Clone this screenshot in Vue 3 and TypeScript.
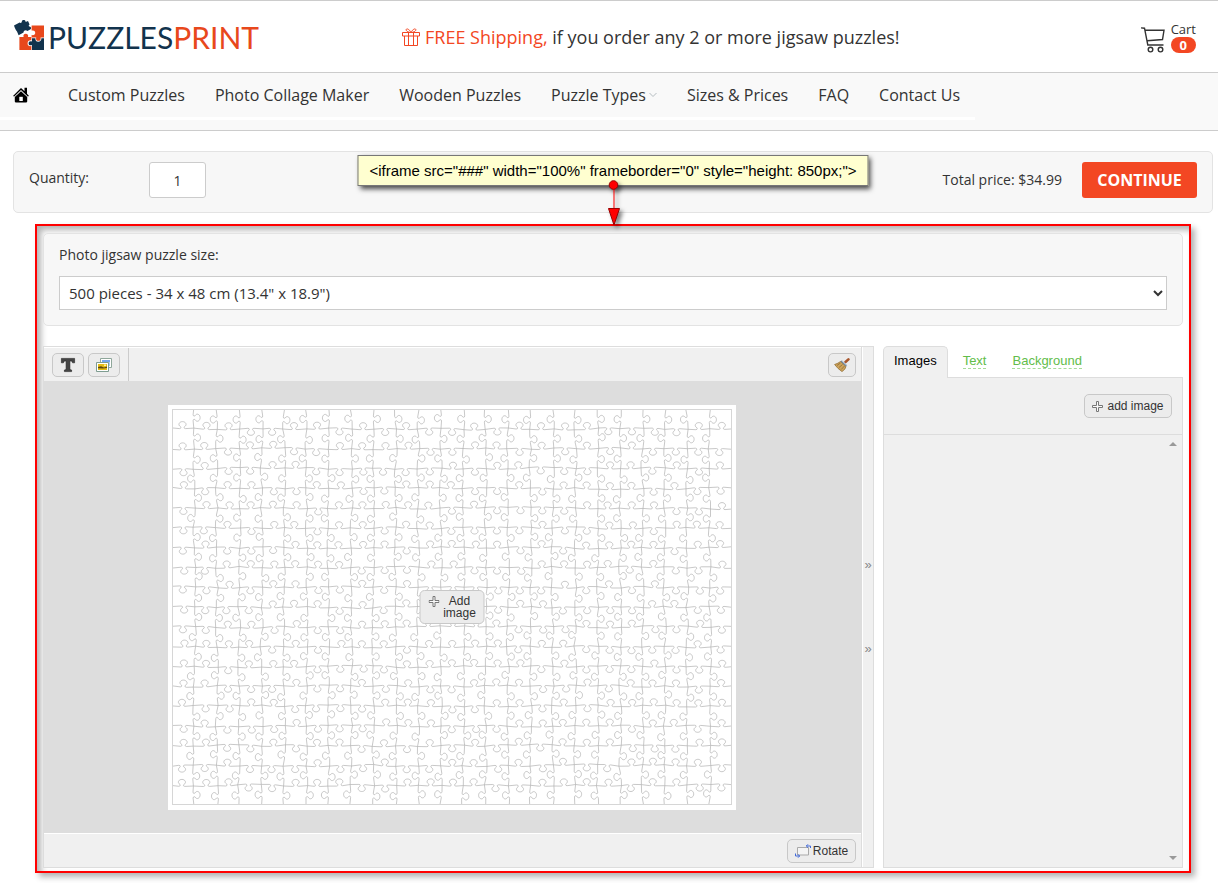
<script setup lang="ts">
import { ref } from 'vue'

interface NavItem {
  label: string
  menu?: boolean
}

const navItems: NavItem[] = [
  { label: 'Custom Puzzles' },
  { label: 'Photo Collage Maker' },
  { label: 'Wooden Puzzles' },
  { label: 'Puzzle Types', menu: true },
  { label: 'Sizes & Prices' },
  { label: 'FAQ' },
  { label: 'Contact Us' },
]

const tabs = ['Images', 'Text', 'Background']
const activeTab = ref('Images')
const quantity = ref('1')
const sizes = ['500 pieces - 34 x 48 cm (13.4" x 18.9")']
const size = ref(sizes[0])
const snippet = '<iframe src="###" width="100%" frameborder="0" style="height: 850px;">'

// Jigsaw cut lines: a jittered grid whose edges each carry one knob.
const COLS = 25
const ROWS = 20
const WIDTH = 560
const HEIGHT = 396

function makeRandom(start: number) {
  let state = start
  return () => {
    state = (state * 1664525 + 1013904223) % 4294967296
    return state / 4294967296
  }
}

type Point = [number, number]

function edge(a: Point, b: Point, side: number, shift: number): string {
  const dx = b[0] - a[0]
  const dy = b[1] - a[1]
  const len = Math.hypot(dx, dy)
  const ux = dx / len
  const uy = dy / len
  const at = (along: number, out: number) => {
    const d = len / 2 + shift + along
    const x = a[0] + ux * d - uy * out * side
    const y = a[1] + uy * d + ux * out * side
    return `${x.toFixed(1)} ${y.toFixed(1)}`
  }
  return (
    `M${a[0].toFixed(1)} ${a[1].toFixed(1)}` +
    `L${at(-3, -0.6)}` +
    `C${at(-1, -0.6)} ${at(-1.4, 1.4)} ${at(-2.8, 2)}` +
    `C${at(-4.6, 3.6)} ${at(-3, 6.4)} ${at(0, 6.4)}` +
    `C${at(3, 6.4)} ${at(4.6, 3.6)} ${at(2.8, 2)}` +
    `C${at(1.4, 1.4)} ${at(1, -0.6)} ${at(3, -0.6)}` +
    `L${b[0].toFixed(1)} ${b[1].toFixed(1)}`
  )
}

function buildCuts(): string {
  const random = makeRandom(77)
  const points: Point[][] = []
  for (let r = 0; r <= ROWS; r++) {
    const line: Point[] = []
    for (let c = 0; c <= COLS; c++) {
      const jx = c === 0 || c === COLS ? 0 : random() * 3 - 1.5
      const jy = r === 0 || r === ROWS ? 0 : random() * 2 - 1
      line.push([(c * WIDTH) / COLS + jx, (r * HEIGHT) / ROWS + jy])
    }
    points.push(line)
  }
  let path = ''
  for (let r = 0; r <= ROWS; r++) {
    for (let c = 0; c <= COLS; c++) {
      if (r > 0 && r < ROWS && c < COLS) {
        path += edge(points[r][c], points[r][c + 1], random() < 0.5 ? 1 : -1, random() * 2 - 1)
      }
      if (c > 0 && c < COLS && r < ROWS) {
        path += edge(points[r][c], points[r + 1][c], random() < 0.5 ? 1 : -1, random() * 2 - 1)
      }
    }
  }
  return path
}

const cuts = buildCuts()
</script>

<template>
  <div class="page">
    <header class="header">
      <a class="logo" href="#" aria-label="PuzzlesPrint">
        <svg class="logo-mark" viewBox="0 0 30 30" width="30" height="30" aria-hidden="true">
          <path fill="#12334d" d="M0 5.400L5.600 2.600C6.400 3.400 8 3 7.800 1.600C8.200 -.2 11 -.4 11.400 1.200C11.600 2 12.600 1.800 14 1L15.600 4.600C14.400 5.400 14.600 6.200 15.400 6.600C17.200 6.800 17.600 8.800 16.200 9.600L13.400 11C12 9.200 9.200 10.400 9.600 12.600L4.600 15.200L3 11.400C1.600 10 .8 7.600 0 5.400Z" />
          <path fill="#e8481c" d="M17.600 5.400H30V17.400H26.600C27 19.600 26 21 24.200 20.800C22.600 20.800 21.600 19.400 22.200 17.400H17.600V15C19.800 15.600 21.400 14.400 21.200 12.400C21 10.600 19.600 10 17.600 10.600Z" />
          <path fill="#e8481c" d="M5.400 17H9.600C9 15.200 9.800 13.800 11.800 13.800C13.600 13.800 14.600 15.200 14 17H17.400V20.400C15 20 13.600 21.400 13.600 23.400C13.600 25.400 15.200 26.600 17.400 26V30H5.400Z" />
          <path fill="#12334d" d="M18 18.200H21.400C21.200 20.600 22.400 21.800 24.200 21.800C26.200 21.800 27.400 20.400 27.400 18.200H30V30H18V25C16.400 25.800 14.600 25 14.600 23.400C14.600 21.600 16.200 20.800 18 21.600Z" />
        </svg>
        <span class="logo-text">PUZZLES<span class="logo-accent">PRINT</span></span>
      </a>

      <p class="promo">
        <svg class="gift" viewBox="0 0 18 18" width="18" height="18" aria-hidden="true">
          <path d="M.5 4.500h17v3.500H.5zM2.500 8v9.500h13V8M6.500 4.500v13M11.500 4.500v13M9 4.500C8 2 5 0 4.300 1.300C3.500 2.800 6 4.200 9 4.500C12 4.200 14.500 2.800 13.700 1.300C13 0 10 2 9 4.500" />
        </svg>
        <span><span class="promo-accent">FREE Shipping,</span> if you order any 2 or more jigsaw puzzles!</span>
      </p>

      <a class="cart" href="#">
        <svg class="cart-icon" viewBox="0 0 24 26" width="24" height="26" aria-hidden="true">
          <path d="M0 .9L3.500 1.200L6.800 18H22.500M4 3.300H23L21.500 12.500L6.200 13.800" />
          <circle cx="9.500" cy="22.600" r="2.300" />
          <circle cx="19.500" cy="22.600" r="2.300" />
        </svg>
        <span class="cart-info">
          <span class="cart-label">Cart</span>
          <span class="cart-count">0</span>
        </span>
      </a>
    </header>

    <nav class="nav">
      <ul class="nav-list">
        <li>
          <a class="home" href="#" aria-label="Home">
            <svg viewBox="0 0 16 16" width="16" height="16" aria-hidden="true">
              <path d="M0 9L8 1L11.500 4.200V.8H14V6.800L16 9L14.800 9.600L8 3L1.200 9.600Z" />
              <path d="M8 4.300L14.200 10V14.600Q14.200 15.600 13 15.600H3Q1.800 15.600 1.800 14.600V10Z" />
              <path class="door" d="M6.300 14V9.800H9.800V14Z" />
            </svg>
          </a>
        </li>
        <li v-for="item in navItems" :key="item.label">
          <a class="nav-link" href="#">
            {{ item.label }}
            <svg v-if="item.menu" class="chevron" viewBox="0 0 8 6" width="8" height="6" aria-hidden="true">
              <path d="M.5 1L4 4.500L7.500 1" />
            </svg>
          </a>
        </li>
      </ul>
    </nav>

    <main class="content">
      <section class="panel order">
        <label class="order-label" for="quantity">Quantity:</label>
        <input id="quantity" v-model="quantity" class="quantity" type="text" />
        <span class="total">Total price: $34.99</span>
        <button class="continue" type="button">CONTINUE</button>
      </section>

      <div class="frame">
        <div class="note">
          <code class="note-text">{{ snippet }}</code>
          <svg class="note-arrow" viewBox="0 0 20 46" width="20" height="46" aria-hidden="true">
            <path d="M10.500 5V34" stroke="#f00" />
            <circle cx="10" cy="5" r="4.300" fill="#f00" stroke="#900" />
            <path d="M5 28.500H16L10.500 45Z" fill="#f00" stroke="#900" />
          </svg>
        </div>

        <section class="panel sizes">
          <label class="sizes-label" for="size">Photo jigsaw puzzle size:</label>
          <select id="size" v-model="size" class="sizes-select">
            <option v-for="option in sizes" :key="option">{{ option }}</option>
          </select>
        </section>

        <div class="workspace">
          <section class="editor">
            <div class="editor-main">
              <div class="toolbar">
                <div class="tools">
                  <button class="btn tool" type="button" aria-label="Add text">
                    <svg viewBox="0 0 16 16" width="16" height="16" aria-hidden="true">
                      <path fill="#444" stroke="#222" stroke-width=".6" d="M1.400 1.400H14.600V5.800H12.600L11.600 4H9.900V12.600L11.600 13V14.600H4.400V13L6.100 12.600V4H4.400L3.400 5.800H1.400Z" />
                    </svg>
                  </button>
                  <button class="btn tool" type="button" aria-label="Add picture">
                    <svg viewBox="0 0 16 16" width="16" height="16" aria-hidden="true">
                      <path fill="#fff" stroke="#8fa79b" d="M4.500 1.500H15.500V10.500H4.500Z" />
                      <path fill="#75a7ee" d="M6 3H14V5.500H6Z" />
                      <path fill="#a9caf5" d="M6 5.500H14V9H6Z" />
                      <path fill="#fff" stroke="#7f9d91" d="M.5 5.500H12.500V14.500H.5Z" />
                      <path fill="#e3bb16" d="M2 7H11V13H2Z" />
                      <path fill="#5c4710" d="M2 10L5 9.200L8 10.500L11 9.500V11L7 11.600L2 11.200Z" />
                      <path fill="#fff2a0" d="M8 7.600H10V9H8Z" />
                    </svg>
                  </button>
                </div>
                <button class="btn clear" type="button" aria-label="Clear">
                  <svg viewBox="0 0 16 16" width="16" height="16" aria-hidden="true">
                    <path stroke="#a8562c" stroke-width="2.600" stroke-linecap="round" d="M11.500 5L14.400 2.400" />
                    <path fill="#cda35c" stroke="#8a6427" stroke-width=".7" d="M6.500 4.500L12 9.500Q11.500 12.500 8 14.600Q4 12 .6 7.500Q4 6.500 6.500 4.500Z" />
                    <path stroke="#8a6427" stroke-width=".7" d="M3 8.500L6.500 6M5 10.500L8.500 7.500M7.200 12.500L10.500 9" />
                    <path stroke="#71869c" stroke-width="1.800" d="M7.200 3.800L12.600 8.800" />
                    <path stroke="#eef3f8" stroke-width=".7" d="M7.600 3.400L12.900 8.400" />
                  </svg>
                </button>
              </div>

              <div class="canvas">
                <div class="paper">
                  <svg class="jigsaw" :viewBox="`0 0 ${WIDTH} ${HEIGHT}`" :width="WIDTH" :height="HEIGHT" aria-hidden="true">
                    <path class="cuts" :d="cuts" />
                    <rect class="outline" x=".5" y=".5" :width="WIDTH - 1" :height="HEIGHT - 1" />
                  </svg>
                  <button class="btn paper-add" type="button">
                    <svg class="plus" viewBox="0 0 11 11" width="11" height="11" aria-hidden="true">
                      <path d="M4.500 .5H6.500V4.500H10.500V6.500H6.500V10.500H4.500V6.500H.5V4.500H4.500Z" />
                    </svg>
                    <span>Add<br />image</span>
                  </button>
                </div>
              </div>

              <div class="editor-foot">
                <button class="btn rotate" type="button">
                  <svg viewBox="0 0 16 14" width="16" height="14" aria-hidden="true">
                    <path fill="#f4f4f4" stroke="#a9a9a9" d="M2.500 3.500H13.500V11H2.500Z" />
                    <path fill="none" stroke="#4169d8" d="M15.500 4V2H11.500M13 .3L11.300 2L13 3.700M.5 9.500V12H4.500M3 10.300L4.700 12L3 13.700" />
                  </svg>
                  Rotate
                </button>
              </div>
            </div>
            <div class="splitter" aria-hidden="true">
              <span>»</span>
              <span>»</span>
            </div>
          </section>

          <section class="library">
            <div class="tabs" role="tablist">
              <button
                v-for="tab in tabs"
                :key="tab"
                class="tab"
                :class="{ active: tab === activeTab }"
                type="button"
                role="tab"
                :aria-selected="tab === activeTab"
                @click="activeTab = tab"
              >
                <span>{{ tab }}</span>
              </button>
            </div>
            <div class="library-actions">
              <button class="btn add" type="button">
                <svg class="plus" viewBox="0 0 11 11" width="11" height="11" aria-hidden="true">
                  <path d="M4.500 .5H6.500V4.500H10.500V6.500H6.500V10.500H4.500V6.500H.5V4.500H4.500Z" />
                </svg>
                add image
              </button>
            </div>
            <div class="library-list">
              <svg viewBox="0 0 8 4" width="8" height="4" aria-hidden="true"><path d="M0 4L4 0L8 4Z" /></svg>
              <svg viewBox="0 0 8 4" width="8" height="4" aria-hidden="true"><path d="M0 0L4 4L8 0Z" /></svg>
            </div>
          </section>
        </div>
      </div>
    </main>
  </div>
</template>

<style>
body {
  margin: 0;
  background: #fff;
}
</style>

<style scoped>
.page,
.page * {
  box-sizing: border-box;
}

.page {
  border-top: 1px solid #ccc;
  padding-bottom: 10px;
  color: #333;
  font-family: 'Open Sans', 'Noto Sans', sans-serif;
  font-size: 14px;
  font-weight: 400;
}

a {
  color: inherit;
  text-decoration: none;
}

button,
input,
select {
  font: inherit;
  color: inherit;
}

button {
  cursor: pointer;
}

svg {
  display: block;
  flex: none;
}

.header {
  display: grid;
  grid-template-columns: 388px 1fr auto;
  align-items: center;
  height: 72px;
  padding: 0 22px 0 14px;
  border-bottom: 1px solid #ccc;
}

.logo {
  display: flex;
  align-items: flex-start;
  gap: 4px;
  color: #12334d;
}

.logo-text {
  font-family: Lato, 'Open Sans', sans-serif;
  font-size: 30px;
  line-height: 34px;
}

.logo-accent {
  color: #e8481c;
}

.promo {
  display: flex;
  align-items: center;
  gap: 5px;
  margin: 0;
  font-size: 18px;
  line-height: 26px;
}

.promo-accent {
  color: #f34723;
}

.gift {
  fill: none;
  stroke: #f34723;
}

.cart {
  display: flex;
  align-items: flex-end;
  gap: 6px;
}

.cart-icon {
  fill: none;
  stroke: #333;
  stroke-width: 1.400;
}

.cart-info {
  display: flex;
  flex-direction: column;
  align-items: center;
  font-size: 13px;
  line-height: 16px;
}

.cart-count {
  width: 25px;
  border-radius: 8px;
  background: #f34723;
  color: #fff;
  font-weight: 700;
  text-align: center;
}

.nav {
  display: flex;
  height: 58px;
  padding-bottom: 10px;
  border-bottom: 1px solid #ccc;
  background: #f9f9f9;
}

.nav-list {
  display: flex;
  margin: 0;
  padding: 0;
  border-bottom: 3px solid #fff;
  font-size: 16px;
  line-height: 44px;
  list-style: none;
}

.home {
  display: flex;
  align-items: center;
  height: 44px;
  padding: 0 24px 0 13px;
  color: #000;
}

.door {
  fill: #fff;
}

.nav-link {
  display: flex;
  align-items: center;
  gap: 3px;
  padding: 0 15px;
}

.chevron {
  fill: none;
  stroke: #b4bcc0;
}

.content {
  padding: 20px 5px 0 13px;
}

.panel {
  border: 1px solid #e3e3e3;
  border-radius: 5px;
  background: #f7f7f7;
}

.order {
  display: flex;
  align-items: flex-start;
  padding: 10px 15px 14px;
}

.order-label {
  width: 120px;
  line-height: 32px;
}

.quantity {
  width: 57px;
  height: 36px;
  border: 1px solid #ccc;
  border-radius: 3px;
  background: #fff;
  text-align: center;
}

.total {
  margin-left: auto;
  line-height: 36px;
}

.continue {
  width: 115px;
  height: 36px;
  margin-left: 20px;
  padding: 0;
  border: 0;
  border-radius: 3px;
  background: #f34723;
  color: #fff;
  font-size: 16px;
  font-weight: 700;
}

.frame {
  position: relative;
  margin: 11px 22px 0;
  padding: 7px 6px 3px;
  border: 2px solid #f00;
  box-shadow: 4px 4px 6px rgba(0, 0, 0, 0.3), inset 4px 4px 6px rgba(0, 0, 0, 0.3);
}

.note {
  position: absolute;
  bottom: 100%;
  left: 50%;
  display: flex;
  flex-direction: column;
  align-items: center;
  transform: translateX(-50%);
}

.note-text {
  padding: 0 11px;
  border: 1px solid #777;
  background: #ffffd0;
  box-shadow: 3px 3px 5px rgba(0, 0, 0, 0.7);
  color: #000;
  font-family: 'Liberation Sans', Arial, sans-serif;
  font-size: 15px;
  line-height: 29px;
  white-space: nowrap;
}

.note-arrow {
  margin-top: -6px;
  filter: drop-shadow(3px 3px 2px rgba(0, 0, 0, 0.5));
  fill: none;
}

.sizes {
  padding: 11px 15px 15px;
}

.sizes-label {
  display: block;
  margin-bottom: 11px;
  line-height: 20px;
}

.sizes-select {
  display: block;
  width: 100%;
  height: 34px;
  padding: 0 5px;
  border: 1px solid #ccc;
  background: #fff;
  font-size: 15px;
}

.workspace {
  display: flex;
  gap: 9px;
  height: 522px;
  margin-top: 20px;
  font-family: 'Liberation Sans', Arial, sans-serif;
  font-size: 12px;
}

.btn {
  display: flex;
  align-items: center;
  justify-content: center;
  height: 24px;
  padding: 0;
  border: 1px solid #c8c8c8;
  border-radius: 5px;
  background: #ececec;
  line-height: 12px;
}

.btn svg:not(.plus) {
  fill: none;
}

.plus {
  fill: #fafafa;
  stroke: #777;
}

.editor {
  display: flex;
  flex: 1;
  border: 1px solid #ddd;
  background: #f0f0f0;
}

.editor-main {
  display: flex;
  flex: 1;
  flex-direction: column;
  border-right: 1px solid #ddd;
}

.toolbar {
  display: flex;
  align-items: center;
  justify-content: space-between;
  height: 34px;
  padding-right: 5px;
  border-top: 1px solid #fff;
  background: #f0f0f0;
}

.tools {
  display: flex;
  align-items: center;
  align-self: stretch;
  gap: 4px;
  padding: 0 8px;
  border-right: 1px solid #ccc;
}

.tool {
  width: 32px;
}

.clear {
  width: 28px;
}

.canvas {
  display: flex;
  flex: 1;
  align-items: center;
  justify-content: center;
  padding-right: 1px;
  background: #ddd;
}

.paper {
  position: relative;
  padding: 4px 4px 5px;
  background: #fff;
}

.cuts {
  fill: none;
  stroke: #b0b0b0;
  stroke-width: 0.700;
}

.outline {
  fill: none;
  stroke: #d6d6d6;
}

.paper-add {
  position: absolute;
  top: 50%;
  left: 50%;
  align-items: flex-start;
  gap: 4px;
  width: 65px;
  height: 34px;
  padding-top: 4px;
  transform: translate(-50%, -50%);
}

.paper-add .plus {
  margin-top: 1px;
}

.editor-foot {
  display: flex;
  align-items: center;
  justify-content: flex-end;
  height: 34px;
  padding-right: 5px;
  border-top: 1px solid #fff;
}

.rotate {
  gap: 2px;
  width: 69px;
}

.splitter {
  display: flex;
  flex-direction: column;
  align-items: center;
  justify-content: center;
  gap: 70px;
  width: 11px;
  border-left: 1px solid #fff;
  color: #888;
  font-size: 13px;
  line-height: 14px;
}

.library {
  display: flex;
  flex-direction: column;
  width: 300px;
}

.tabs {
  display: flex;
  height: 32px;
  font-size: 13px;
  line-height: 16px;
}

.tabs::after {
  flex: 1;
  border-bottom: 1px solid #ddd;
  content: '';
}

.tab {
  display: flex;
  align-items: flex-start;
  justify-content: center;
  padding: 7px 11px 0 15px;
  border: 0;
  border-bottom: 1px solid #ddd;
  background: none;
  color: #62bd4a;
  line-height: 15px;
}

.tab span {
  border-bottom: 1px dashed #a6dc98;
}

.tab.active {
  padding: 6px 10px 0;
  border: 1px solid #ddd;
  border-bottom: 0;
  border-radius: 5px 5px 0 0;
  background: #f0f0f0;
  color: #000;
}

.tab.active span {
  border-bottom: 0;
}

.library-actions {
  display: flex;
  align-items: center;
  justify-content: flex-end;
  height: 56px;
  padding-right: 10px;
  border: 1px solid #ddd;
  border-width: 0 1px;
  background: #f0f0f0;
}

.add {
  gap: 4px;
  width: 88px;
}

.library-list {
  display: flex;
  flex: 1;
  flex-direction: column;
  align-items: flex-end;
  justify-content: space-between;
  padding: 7px 5px;
  border: 1px solid #ddd;
  background: #f0f0f0;
  fill: #999;
}
</style>
